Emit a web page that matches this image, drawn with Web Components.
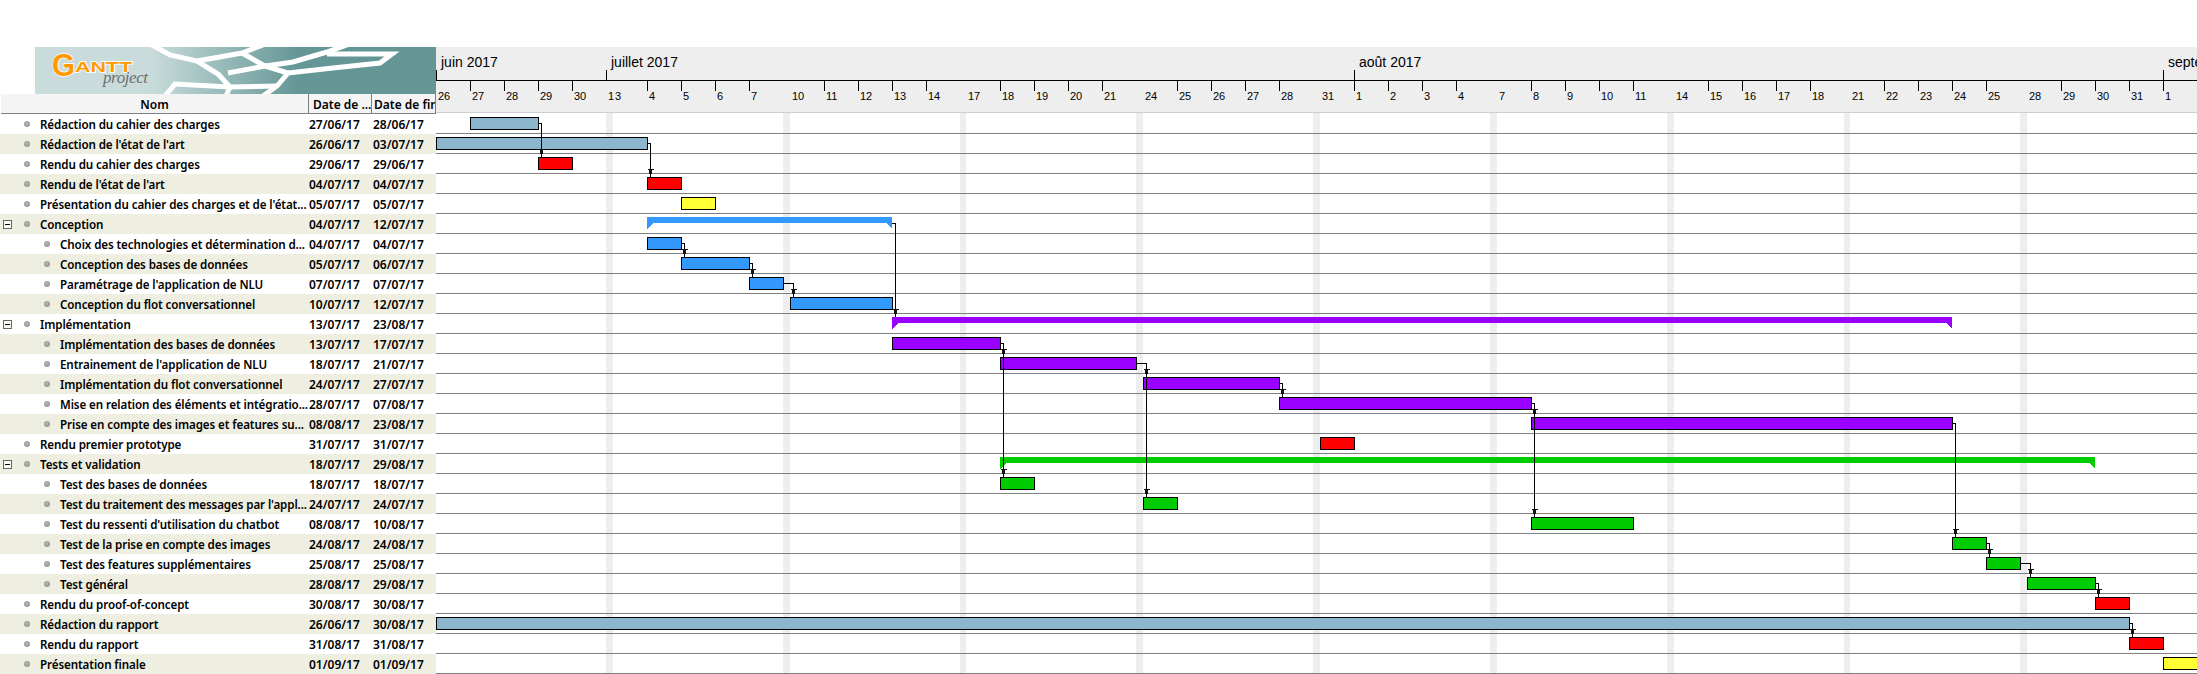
<!DOCTYPE html>
<html lang="fr">
<head>
<meta charset="utf-8">
<title>GanttProject</title>
<style>
  html, body { margin: 0; background: #fff; overflow: hidden; }
  body { width: 2197px; height: 674px; font-family: "Noto Sans", sans-serif; }
</style>
</head>
<body>
<gantt-app></gantt-app>
<script>
// x of each monday in the chart, weekends are squeezed to 6 or 7px
const MONDAYS = [436, 613, 790, 966, 1143, 1320, 1497, 1674, 1850, 2027, 2204];
const FIRST_DAY = Date.UTC(2017, 5, 26);
const DAY_MS = 86400000;
const CHART_X = 436;

const COLORS = {
  steel: '#8cb6ce', red: '#ff0000', yellow: '#ffff33',
  blue: '#3399ff', purple: '#9900ff', green: '#00cc00'
};

const TASKS = [
  { name: 'Rédaction du cahier des charges', start: '27/06/17', end: '28/06/17', color: 'steel' },
  { name: "Rédaction de l'état de l'art", start: '26/06/17', end: '03/07/17', color: 'steel' },
  { name: 'Rendu du cahier des charges', start: '29/06/17', end: '29/06/17', color: 'red' },
  { name: "Rendu de l'état de l'art", start: '04/07/17', end: '04/07/17', color: 'red' },
  { name: "Présentation du cahier des charges et de l'état...", start: '05/07/17', end: '05/07/17', color: 'yellow' },
  { name: 'Conception', start: '04/07/17', end: '12/07/17', color: 'blue', group: true },
  { name: 'Choix des technologies et détermination d...', start: '04/07/17', end: '04/07/17', color: 'blue', depth: 1 },
  { name: 'Conception des bases de données', start: '05/07/17', end: '06/07/17', color: 'blue', depth: 1 },
  { name: "Paramétrage de l'application de NLU", start: '07/07/17', end: '07/07/17', color: 'blue', depth: 1 },
  { name: 'Conception du flot conversationnel', start: '10/07/17', end: '12/07/17', color: 'blue', depth: 1 },
  { name: 'Implémentation', start: '13/07/17', end: '23/08/17', color: 'purple', group: true },
  { name: 'Implémentation des bases de données', start: '13/07/17', end: '17/07/17', color: 'purple', depth: 1 },
  { name: "Entrainement de l'application de NLU", start: '18/07/17', end: '21/07/17', color: 'purple', depth: 1 },
  { name: 'Implémentation du flot conversationnel', start: '24/07/17', end: '27/07/17', color: 'purple', depth: 1 },
  { name: 'Mise en relation des éléments et intégratio...', start: '28/07/17', end: '07/08/17', color: 'purple', depth: 1 },
  { name: 'Prise en compte des images et features su...', start: '08/08/17', end: '23/08/17', color: 'purple', depth: 1 },
  { name: 'Rendu premier prototype', start: '31/07/17', end: '31/07/17', color: 'red' },
  { name: 'Tests et validation', start: '18/07/17', end: '29/08/17', color: 'green', group: true },
  { name: 'Test des bases de données', start: '18/07/17', end: '18/07/17', color: 'green', depth: 1 },
  { name: "Test du traitement des messages par l'appl...", start: '24/07/17', end: '24/07/17', color: 'green', depth: 1 },
  { name: "Test du ressenti d'utilisation du chatbot", start: '08/08/17', end: '10/08/17', color: 'green', depth: 1 },
  { name: 'Test de la prise en compte des images', start: '24/08/17', end: '24/08/17', color: 'green', depth: 1 },
  { name: 'Test des features supplémentaires', start: '25/08/17', end: '25/08/17', color: 'green', depth: 1 },
  { name: 'Test général', start: '28/08/17', end: '29/08/17', color: 'green', depth: 1 },
  { name: 'Rendu du proof-of-concept', start: '30/08/17', end: '30/08/17', color: 'red' },
  { name: 'Rédaction du rapport', start: '26/06/17', end: '30/08/17', color: 'steel' },
  { name: 'Rendu du rapport', start: '31/08/17', end: '31/08/17', color: 'red' },
  { name: 'Présentation finale', start: '01/09/17', end: '01/09/17', color: 'yellow' }
];

// dependencies, by row index
const LINKS = [
  [0, 2], [1, 3], [5, 10], [6, 7], [7, 8], [8, 9],
  [11, 12], [12, 13], [13, 14], [14, 15],
  [11, 18], [12, 19], [14, 20], [15, 21],
  [21, 22], [22, 23], [23, 24], [25, 26]
];

function dayIndex(text) {
  const [d, m, y] = text.split('/').map(Number);
  return Math.round((Date.UTC(2000 + y, m - 1, d) - FIRST_DAY) / DAY_MS);
}

function dayToX(index) {
  const week = Math.floor(index / 7);
  const wd = index % 7;
  return MONDAYS[week] + Math.min(wd, 5) * 34;
}

class GanttApp extends HTMLElement {
  constructor() {
    super();
    this.attachShadow({ mode: 'open' });
    this.shadowRoot.innerHTML = `
      <style>
        :host { display: flex; width: 2197px; height: 674px; padding-top: 47px; box-sizing: border-box; overflow: hidden; }
        .left { width: 436px; flex: none; display: flex; flex-direction: column; }
      </style>
      <div class="left">
        <gantt-logo></gantt-logo>
        <gantt-table-header></gantt-table-header>
        <div id="rows"></div>
      </div>
      <gantt-chart></gantt-chart>
    `;
    const rows = this.shadowRoot.getElementById('rows');
    TASKS.forEach((task, i) => {
      const row = document.createElement('gantt-row');
      if (i % 2) row.setAttribute('alt', '');
      if (task.group) row.setAttribute('group', '');
      if (task.depth) row.setAttribute('depth', task.depth);
      row.innerHTML = `<span></span><span slot="start">${task.start}</span><span slot="end">${task.end}</span>`;
      row.firstChild.textContent = task.name;
      rows.appendChild(row);
    });
  }
}

class GanttLogo extends HTMLElement {
  constructor() {
    super();
    this.attachShadow({ mode: 'open' });
    this.shadowRoot.innerHTML = `
      <style>
        :host { display: block; margin-left: 35px; width: 401px; height: 47px; overflow: hidden; }
        svg { display: block; }
      </style>
      <svg width="401" height="47" viewBox="35 47 401 47">
        <defs>
          <linearGradient id="bg" gradientUnits="userSpaceOnUse" x1="150" y1="0" x2="300" y2="0">
            <stop offset="0" stop-color="#c9dcdb"/>
            <stop offset="1" stop-color="#639695"/>
          </linearGradient>
        </defs>
        <rect x="35" y="47" width="401" height="47" fill="url(#bg)"/>
        <g fill="none" stroke="#fff" stroke-width="5" stroke-linejoin="miter">
          <path d="M152 45 L170 55 L197 61 L218 74 L230 87 L226 96"/>
          <path d="M165 96 L175 84 L230 87 L277 86"/>
          <path d="M197 61 L242 53 L263 45"/>
          <path d="M242 53 L265 66 L228 73"/>
          <path d="M265 66 L293 62 L327 52 L347 45"/>
          <path d="M265 66 L288 73 L277 86 L263 96"/>
          <path d="M288 73 L333 68 L380 63 L392 54 L327 54"/>
        </g>
        <g font-family="'Liberation Sans', sans-serif" fill="#ff9900" stroke="#fff" stroke-width="1.5" paint-order="stroke">
          <text x="52" y="76" font-size="32" font-weight="bold" textLength="23" lengthAdjust="spacingAndGlyphs">G</text>
          <text x="75" y="72" font-size="15" font-weight="bold" textLength="57" lengthAdjust="spacingAndGlyphs">ANTT</text>
        </g>
        <text x="103" y="83" font-family="'Liberation Serif', serif" font-style="italic" font-size="17" textLength="45" fill="#6e6e6e">project</text>
      </svg>
    `;
  }
}

class GanttTableHeader extends HTMLElement {
  constructor() {
    super();
    this.attachShadow({ mode: 'open' });
    this.shadowRoot.innerHTML = `
      <style>
        :host { display: grid; grid-template-columns: 308px 63px 64px; height: 20px; margin-left: 1px;
                font: 600 12px/21px "Noto Sans", sans-serif; color: #000; }
        div { background: #f4f4f4; border-right: 1px solid #808080; border-bottom: 1px solid #808080;
              box-sizing: border-box; white-space: nowrap; overflow: hidden; }
        .name { text-align: center; }
        .date { padding-left: 4px; }
        .date + .date { padding-left: 2px; }
      </style>
      <div class="name">Nom</div>
      <div class="date">Date de ...</div>
      <div class="date">Date de fin</div>
    `;
  }
}

class GanttRow extends HTMLElement {
  constructor() {
    super();
    this.attachShadow({ mode: 'open' });
    this.shadowRoot.innerHTML = `
      <style>
        :host { display: grid; grid-template-columns: 309px 64px 63px; height: 20px;
                font: 600 12px/21px "Noto Sans", sans-serif; color: #000; background: #fff; }
        :host([alt]) { background: #efefe1; }
        .name { display: flex; align-items: center; white-space: nowrap; overflow: hidden; padding-left: 3px;
                font-size: 11.6px; letter-spacing: -.1px; }
        .box { width: 9px; height: 9px; flex: none; visibility: hidden; display: block; }
        :host([group]) .box { visibility: visible; }
        .dot { width: 6px; height: 6px; flex: none; margin: 0 10px 1px 12px; border-radius: 50%;
               background: radial-gradient(circle at 45% 40%, #bbb 0, #999 60%, #888 100%); }
        :host([depth="1"]) .dot { margin-left: 32px; }
        .date { white-space: nowrap; }
      </style>
      <div class="name">
        <svg class="box" viewBox="0 0 9 9" shape-rendering="crispEdges">
          <rect x=".5" y=".5" width="8" height="8" fill="#fbfbf6" stroke="#666"/>
          <rect x="2" y="4" width="5" height="1" fill="#000"/>
        </svg>
        <span class="dot"></span>
        <slot></slot>
      </div>
      <div class="date"><slot name="start"></slot></div>
      <div class="date"><slot name="end"></slot></div>
    `;
  }
}

class GanttTimeline extends HTMLElement {
  constructor() {
    super();
    this.attachShadow({ mode: 'open' });
    const months = [[436, 'juin 2017'], [606, 'juillet 2017'], [1354, 'août 2017'], [2163, 'septembre 2017']];
    const monthCells = months.map(([x, label], i) => {
      const next = months[i + 1] ? months[i + 1][0] : 2197;
      return `<div class="month" style="width:${next - x}px">${label}</div>`;
    }).join('');

    let dayCells = '';
    const labels = ['26','27','28','29','30','1','3','4','5','6','7','10','11','12','13','14','17','18','19','20','21','24','25','26','27','28','31','1','2','3','4','7','8','9','10','11','14','15','16','17','18','21','22','23','24','25','28','29','30','31','1'];
    let n = 0;
    for (let week = 0; week < 10; week++) {
      for (let wd = 0; wd < 5; wd++) {
        if (MONDAYS[week] + wd * 34 >= 2197) break;
        const tick = wd > 0 ? ' tick' : '';
        dayCells += `<div class="day${tick}" style="width:34px">${labels[n++]}</div>`;
      }
      const w = MONDAYS[week + 1] - MONDAYS[week] - 170;
      const firstOfMonth = week === 0; // only 1 July falls on a saturday
      dayCells += `<div class="day" style="width:${w}px">${firstOfMonth ? labels[n++] : ''}</div>`;
    }

    this.shadowRoot.innerHTML = `
      <style>
        :host { display: block; background: #eeeeee; height: 66px; box-sizing: border-box; border-bottom: 1px solid #cfcfcf;
                font-family: "Liberation Sans", Arial, sans-serif; color: #000; overflow: hidden; }
        .months { display: flex; height: 34px; box-sizing: border-box; border-bottom: 1px solid #000; }
        .month { flex: none; box-sizing: border-box; font-size: 14px; line-height: 16px; padding: 7px 0 0 5px; white-space: nowrap;
                 background: linear-gradient(#000, #000) 0 100% / 1px 10px no-repeat; overflow: hidden; }
        .days { display: flex; height: 31px; }
        .day { flex: none; box-sizing: border-box; font-size: 11px; line-height: 13px; padding: 9px 0 0 2px; white-space: nowrap; }
        .day.tick { background: linear-gradient(#000, #000) 0 0 / 1px 10px no-repeat; }
      </style>
      <div class="months">${monthCells}</div>
      <div class="days">${dayCells}</div>
    `;
  }
}

class GanttBar extends HTMLElement {
  constructor() {
    super();
    this.attachShadow({ mode: 'open' });
  }

  connectedCallback() {
    const color = this.getAttribute('color');
    const w = Number(this.getAttribute('w'));
    if (this.hasAttribute('summary')) {
      this.shadowRoot.innerHTML = `
        <style>:host { display: block; } svg { display: block; }</style>
        <svg width="${w}" height="12" shape-rendering="crispEdges">
          <polygon fill="${color}" points="0,0 ${w},0 ${w},12 ${w - 6},6 6,6 0,12"/>
        </svg>`;
    } else {
      this.shadowRoot.innerHTML = `
        <style>:host { display: block; box-sizing: border-box; height: 13px; width: ${w + 1}px; border: 1px solid #000; background: ${color}; }</style>`;
    }
  }
}

class GanttChart extends HTMLElement {
  constructor() {
    super();
    this.attachShadow({ mode: 'open' });
  }

  connectedCallback() {
    this.render();
  }

  render() {
    const rowLines = TASKS.map(() => '<div class="row"></div>').join('');

    let bands = '';
    for (let week = 0; week < 10; week++) {
      const left = MONDAYS[week] + 170 - CHART_X;
      const w = MONDAYS[week + 1] - MONDAYS[week] - 170;
      bands += `<div class="band" style="left:${left}px;width:${w}px"></div>`;
    }

    const boxes = TASKS.map((task, i) => {
      const l = dayToX(dayIndex(task.start));
      const r = dayToX(dayIndex(task.end) + 1);
      return { l, r, top: 4 + 20 * i };
    });

    const bars = TASKS.map((task, i) => {
      const b = boxes[i];
      const summary = task.group ? 'summary' : '';
      return `<gantt-bar ${summary} color="${COLORS[task.color]}" w="${b.r - b.l}" style="left:${b.l - CHART_X}px;top:${b.top}px"></gantt-bar>`;
    }).join('');

    const links = LINKS.map(([from, to]) => {
      const a = boxes[from];
      const b = boxes[to];
      const x = b.l - CHART_X + 3;
      const sx = a.r - CHART_X;
      const sy = a.top + 6;
      const head = `${x - 2.5},${b.top - 8} ${x + 3.5},${b.top - 8} ${x + 3.5},${b.top - 7} ${x + 2.5},${b.top - 7} ${x + 1.5},${b.top - 3} ${x - .5},${b.top - 3} ${x - 1.5},${b.top - 7} ${x - 2.5},${b.top - 7}`;
      return `<path d="M${sx} ${sy + .5}H${x + .5}V${b.top}"/><polygon points="${head}"/>`;
    }).join('');

    this.shadowRoot.innerHTML = `
      <style>
        :host { display: block; flex: 1; min-width: 0; overflow: hidden; }
        .body { position: relative; padding-top: 1px; height: 561px; box-sizing: border-box; overflow: hidden; }
        .row { position: relative; height: 20px; box-sizing: border-box; border-bottom: 1px solid #808080; }
        .band { position: absolute; top: 0; bottom: 0; background: #eeeeee; }
        gantt-bar { position: absolute; }
        svg.links { position: absolute; left: 0; top: 0; }
        svg.links path { fill: none; stroke: #000; stroke-width: 1; }
        svg.links polygon { fill: #111; }
      </style>
      <gantt-timeline></gantt-timeline>
      <div class="body">
        ${bands}
        ${rowLines}
        ${bars}
        <svg class="links" width="1761" height="561" shape-rendering="crispEdges">${links}</svg>
      </div>
    `;
  }
}

customElements.define('gantt-logo', GanttLogo);
customElements.define('gantt-table-header', GanttTableHeader);
customElements.define('gantt-row', GanttRow);
customElements.define('gantt-timeline', GanttTimeline);
customElements.define('gantt-bar', GanttBar);
customElements.define('gantt-chart', GanttChart);
customElements.define('gantt-app', GanttApp);
</script>
</body>
</html>
